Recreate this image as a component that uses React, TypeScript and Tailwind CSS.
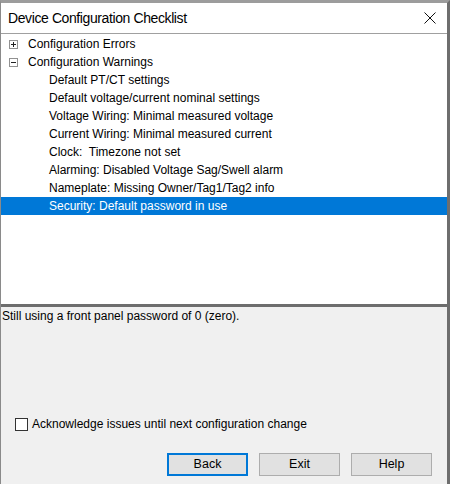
import React from "react";

const warnings = [
  "Default PT/CT settings",
  "Default voltage/current nominal settings",
  "Voltage Wiring: Minimal measured voltage",
  "Current Wiring: Minimal measured current",
  "Clock:  Timezone not set",
  "Alarming: Disabled Voltage Sag/Swell alarm",
  "Nameplate: Missing Owner/Tag1/Tag2 info",
  "Security: Default password in use",
];

function ExpandBox({ open }: { open: boolean }) {
  return (
    <svg width="9" height="9" viewBox="0 0 9 9" className="shrink-0">
      <rect x="0.5" y="0.5" width="8" height="8" fill="#fff" stroke="#919191" />
      <line x1="2" y1="4.5" x2="7" y2="4.5" stroke="#222" />
      {!open && <line x1="4.5" y1="2" x2="4.5" y2="7" stroke="#222" />}
    </svg>
  );
}

function Button({ label, focused }: { label: string; focused?: boolean }) {
  return (
    <button
      className={`w-[81px] h-[23px] bg-[#e1e1e1] text-[12.5px] text-black ${
        focused ? "border-2 border-[#0078d7]" : "border border-[#adadad]"
      }`}
    >
      {label}
    </button>
  );
}

export default function App() {
  const selected = warnings.length - 1;

  return (
    <div className="w-[450px] h-[484px] flex flex-col bg-[#f0f0f0] border-t-[3px] border-t-[#9c9c9c] border-l border-l-[#8a8a8a] border-r-[3px] border-r-[#6e6e6e] font-['Liberation_Sans',Arial,sans-serif] text-black overflow-hidden">
      {/* title bar */}
      <div className="h-[30px] bg-white flex items-center justify-between pl-[7px] pr-[11px] shrink-0">
        <span className="text-[14px] tracking-[-0.4px]">Device Configuration Checklist</span>
        <svg width="12" height="12" viewBox="0 0 12 12">
          <path d="M0.5 0.5 L11.5 11.5 M11.5 0.5 L0.5 11.5" stroke="#111" strokeWidth="1" />
        </svg>
      </div>

      {/* tree */}
      <div className="h-[274px] shrink-0 bg-white border-t border-t-[#a0a0a0] border-b-[3px] border-b-[#6d6d6d] pt-px text-[12px]">
        <div className="h-[18px] flex items-center pl-[8px] gap-[10px]">
          <ExpandBox open={false} />
          <span>Configuration Errors</span>
        </div>
        <div className="h-[18px] flex items-center pl-[8px] gap-[10px]">
          <ExpandBox open />
          <span>Configuration Warnings</span>
        </div>
        {warnings.map((w, i) => (
          <div
            key={w}
            className={`h-[18px] flex items-center pl-[48px] whitespace-pre ${
              i === selected ? "bg-[#0078d7] text-white" : ""
            }`}
          >
            {w}
          </div>
        ))}
      </div>

      {/* description + options */}
      <div className="flex-1 flex flex-col text-[12px]">
        <div className="pl-px pt-px leading-[16px]">Still using a front panel password of 0 (zero).</div>
        <div className="flex-1" />
        <label className="flex items-center gap-[4px] pl-[14px]">
          <span className="w-[13px] h-[13px] bg-white border border-[#333]" />
          <span>Acknowledge issues until next configuration change</span>
        </label>
        <div className="flex justify-end gap-[11px] pr-[15px] pt-[20px] pb-[8px]">
          <Button label="Back" focused />
          <Button label="Exit" />
          <Button label="Help" />
        </div>
      </div>
    </div>
  );
}
